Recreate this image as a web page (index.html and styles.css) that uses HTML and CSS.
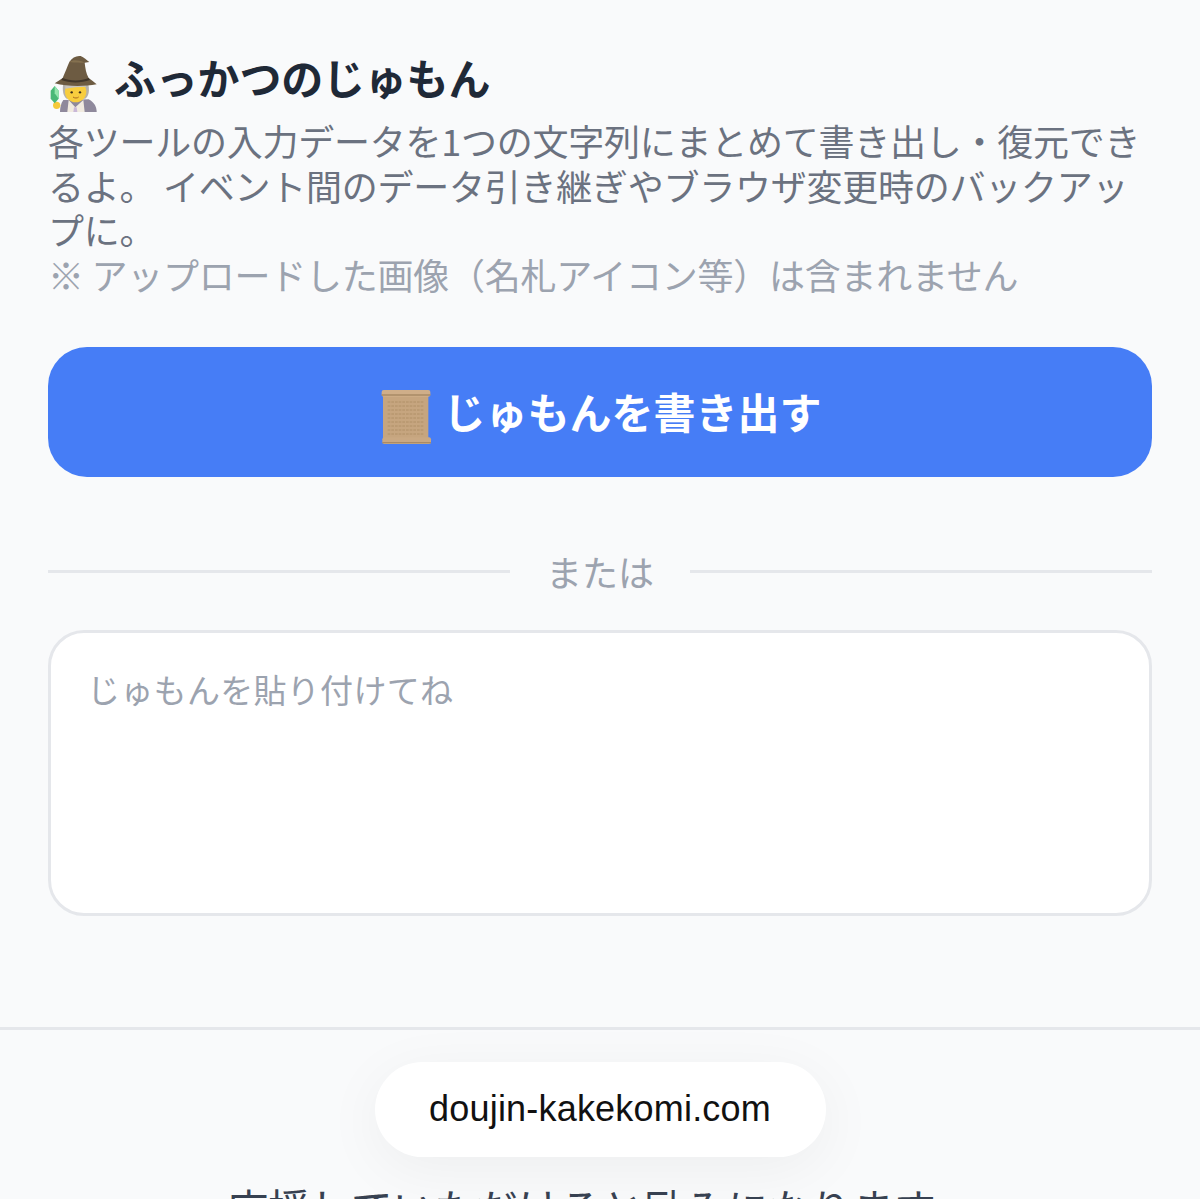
FILE: index.html
```html
<!DOCTYPE html>
<html lang="ja">
<head>
    <title>ふっかつのじゅもん</title>
    <link rel="stylesheet" href="styles.css">
</head>
<body>
    <main class="container">
        <h2 class="section-title">
            <svg class="mage-icon" viewBox="0 0 180 186">
                <path d="M58 150 C50 160 48 176 48 186 L158 186 C158 172 152 158 134 148Z" fill="#8f899c"/>
                <path d="M74 150 L94 172 L118 150 L122 186 L70 186Z" fill="#f1ebe0"/>
                <path d="M90 172 L98 172 L100 186 L88 186Z" fill="#c9b8d8"/>
                <circle cx="38" cy="166" r="11" fill="#f5c93b"/>
                <path d="M32 108 L44 122 L44 146 L32 160 L20 146 L20 122Z" fill="#49b877"/>
                <path d="M32 108 L44 122 L44 146 L32 130Z" fill="#93e6ad"/>
                <path d="M58 100 C54 122 58 140 68 146 L124 146 C134 140 138 120 132 100Z" fill="#b5b1ab"/>
                <circle cx="95" cy="125" r="32" fill="#f8cd3e"/>
                <path d="M64 116 C82 112 106 110 126 110 L126 98 L64 98Z" fill="#c7c3bb"/>
                <circle cx="83" cy="127" r="3.5" fill="#3b2d1d"/>
                <circle cx="108" cy="127" r="3.5" fill="#3b2d1d"/>
                <path d="M87 141 C92 145 100 145 104 141" fill="none" stroke="#a8691f" stroke-width="3"/>
                <path d="M56 84 C64 66 70 50 76 36 C84 22 98 16 110 18 C120 22 128 30 136 36 L122 38 C124 54 126 70 134 84 C142 90 150 96 158 103 C120 110 70 110 32 100 C40 94 48 90 56 84Z" fill="#6d5b42"/>
                <path d="M76 36 C88 28 104 30 122 38 C112 38 92 38 76 36Z" fill="#84704f"/>
                <path d="M56 84 C78 94 112 94 134 84 L138 90 C112 100 76 100 52 90Z" fill="#41362a"/>
            </svg>
            <span>ふっかつのじゅもん</span>
        </h2>
        <p class="section-desc">各ツールの入力データを1つの文字列にまとめて書き出し・復元できるよ。 イベント間のデータ引き継ぎやブラウザ変更時のバックアップに。</p>
        <p class="section-note">※ アップロードした画像（名札アイコン等）は含まれません</p>

        <button class="export-btn">
            <svg class="scroll-icon" viewBox="0 0 186 186">
                <rect x="24" y="30" width="136" height="138" fill="#c6a57f"/>
                <rect x="20" y="18" width="146" height="20" rx="6" fill="#cfae89"/>
                <path d="M20 33H166" stroke="#a98a66" stroke-width="4"/>
                <path d="M38 54H148M38 66H148M38 78H148M38 90H148M38 102H148M38 114H148M38 126H148M38 138H148M38 150H148" stroke="#b09069" stroke-width="3" stroke-dasharray="8 3"/>
                <rect x="22" y="160" width="146" height="20" rx="6" fill="#c9a883"/>
                <path d="M22 176H168" stroke="#a98a66" stroke-width="4"/>
            </svg>
            <span class="export-label">じゅもんを書き出す</span>
        </button>

        <div class="divider"><span>または</span></div>

        <textarea class="spell-input" placeholder="じゅもんを貼り付けてね"></textarea>
    </main>

    <footer class="site-footer">
        <a class="domain-pill">doujin-kakekomi.com</a>
        <p class="cheer">応援していただけると励みになります。</p>
    </footer>
</body>
</html>
```

FILE: styles.css
```css
* {
    margin: 0;
    padding: 0;
    box-sizing: border-box;
}

html, body {
    height: 1199px;
    overflow: hidden;
}

body {
    background: #f9fafb;
    font-family: "Noto Sans CJK JP", "Noto Sans", sans-serif;
}

.container {
    height: 1030px;
    padding: 46px 48px 0;
    border-bottom: 3px solid #e5e7eb;
}

.section-title {
    display: flex;
    align-items: center;
    gap: 10px;
    height: 60px;
    font-size: 42px;
    font-weight: 700;
    letter-spacing: -0.2px;
    color: #1f2937;
}

.mage-icon {
    width: 60px;
    height: 62px;
    margin: 10px 0 0 -4px;
}

.section-desc {
    margin-top: 12px;
    font-size: 36px;
    line-height: 44.7px;
    letter-spacing: -0.25px;
    color: #6b7280;
}

.section-note {
    font-size: 36px;
    line-height: 44.7px;
    letter-spacing: -0.25px;
    color: #9ca3af;
}

.export-btn {
    display: flex;
    align-items: center;
    justify-content: center;
    gap: 6px;
    width: 100%;
    height: 130px;
    margin-top: 50px;
    padding-right: 3px;
    border: none;
    border-radius: 39px;
    background: #467df6;
    color: #fff;
    font-family: inherit;
    font-size: 42px;
    font-weight: 700;
}

.export-label {
    margin-bottom: 2px;
}

.scroll-icon {
    width: 62px;
    height: 62px;
    margin-top: 6px;
}

.divider {
    display: flex;
    align-items: center;
    gap: 36px;
    margin-top: 72px;
    font-size: 36px;
    line-height: 45px;
    color: #9ca3af;
}

.divider::before,
.divider::after {
    content: "";
    flex: 1;
    height: 3px;
    background: #e5e7eb;
}

.spell-input {
    display: block;
    width: 100%;
    height: 286px;
    margin-top: 36px;
    padding: 34px 36px;
    border: 3px solid #e5e7eb;
    border-radius: 36px;
    background: #fff;
    font-family: inherit;
    font-size: 33px;
    line-height: 45px;
    letter-spacing: 0.3px;
    resize: none;
}

.spell-input::placeholder {
    color: #9ca3af;
}

.site-footer {
    display: flex;
    flex-direction: column;
    align-items: center;
    padding-top: 32px;
}

.domain-pill {
    display: flex;
    align-items: center;
    justify-content: center;
    width: 451px;
    height: 95px;
    padding-bottom: 2px;
    border-radius: 48px;
    background: #fff;
    box-shadow: 0 12px 60px rgba(0, 0, 0, 0.05);
    font-family: "Liberation Sans", sans-serif;
    font-size: 36px;
    letter-spacing: 0.2px;
    color: #111;
}

.cheer {
    margin-top: 20px;
    font-size: 42px;
    line-height: 60px;
    letter-spacing: -0.2px;
    white-space: nowrap;
    color: #374151;
}
```
